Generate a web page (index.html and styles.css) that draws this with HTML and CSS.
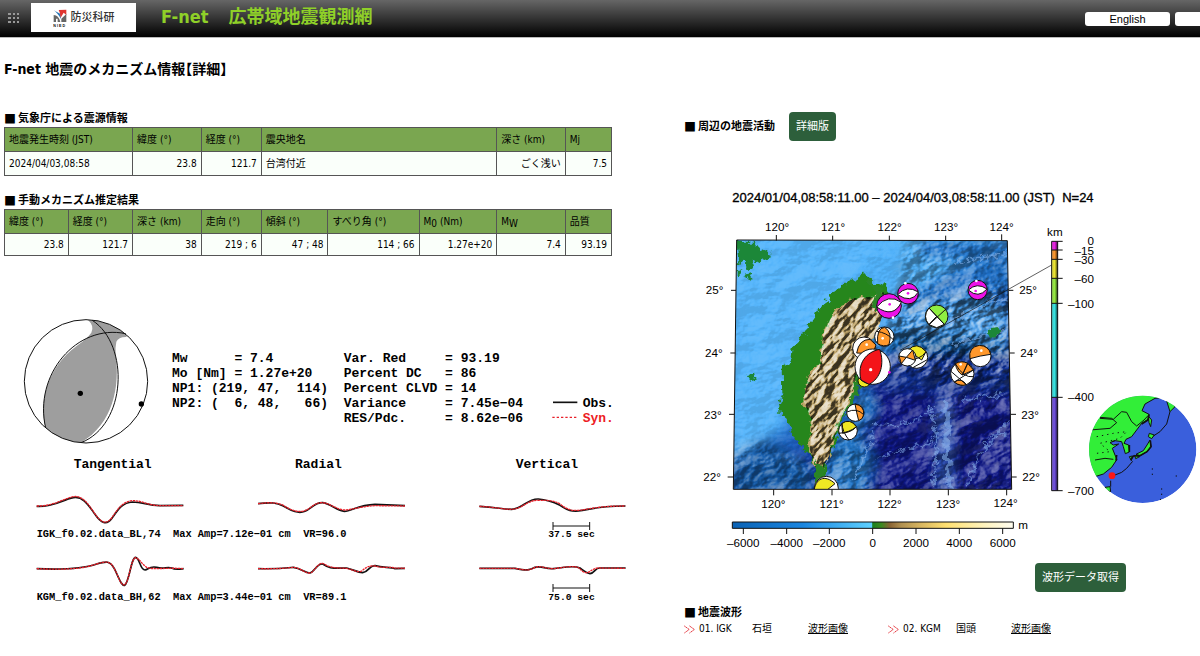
FILE: index.html
```html
<!DOCTYPE html>
<html lang="ja">
<head>
<meta charset="utf-8">
<title>F-net 広帯域地震観測網</title>
<link rel="stylesheet" href="styles.css">
</head>
<body>
<header class="topbar">
  <svg class="grip" viewBox="0 0 12 12" aria-hidden="true"><g fill="#999"><path d="M0 1h3v2H0zM5 1h2v2H5zM9 1h2v2H9zM0 5h3v2H0zM5 5h2v2H5zM9 5h2v2H9zM0 9h3v2H0zM5 9h2v2H5zM9 9h2v2H9z"/></g></svg>
  <a class="logo" href="#">
    <svg class="logo-mark" viewBox="0 0 42 54" aria-hidden="true">
      <path d="M2 4L23 15L24 30Q12 10 2 4Z" fill="#2b78b8"/>
      <path d="M17 3L40 2V18L32 11L23 26Q22 12 17 3Z" fill="#e03530"/>
      <path d="M2 18Q17 18 22 39H14V29H9V39H2ZM25 29L40 15V39H25Z" fill="#666"/>
      <text x="1" y="53" class="logo-sub">NIED</text>
    </svg>
    <span>防災科研</span>
  </a>
  <div class="site-name"><span>F-net</span><span>広帯域地震観測網</span></div>
  <nav class="lang"><button type="button">English</button><button type="button"></button></nav>
</header>
<main class="columns">
  <div class="left">
    <div class="tables">
      <h1>F-net 地震のメカニズム情報【詳細】</h1>
      <h2><span class="sq">■</span>気象庁による震源情報</h2>
      <table class="source">
        <colgroup><col style="width:21.1%"><col style="width:11.3%"><col style="width:9.9%"><col style="width:38.8%"><col style="width:11.3%"><col style="width:7.6%"></colgroup>
        <thead><tr><th>地震発生時刻 (JST)</th><th>緯度 (°)</th><th>経度 (°)</th><th>震央地名</th><th>深さ (km)</th><th>Mj</th></tr></thead>
        <tbody><tr><td class="l">2024/04/03,08:58</td><td>23.8</td><td>121.7</td><td class="l">台湾付近</td><td>ごく浅い</td><td>7.5</td></tr></tbody>
      </table>
      <h2><span class="sq">■</span>手動メカニズム推定結果</h2>
      <table class="result">
        <colgroup><col style="width:10.5%"><col style="width:10.6%"><col style="width:11.3%"><col style="width:9.9%"><col style="width:11%"><col style="width:15%"><col style="width:12.8%"><col style="width:11.3%"><col style="width:7.6%"></colgroup>
        <thead><tr><th>緯度 (°)</th><th>経度 (°)</th><th>深さ (km)</th><th>走向 (°)</th><th>傾斜 (°)</th><th>すべり角 (°)</th><th>M<sub>0</sub> (Nm)</th><th>M<sub>W</sub></th><th>品質</th></tr></thead>
        <tbody><tr><td>23.8</td><td>121.7</td><td>38</td><td>219 ; 6</td><td>47 ; 48</td><td>114 ; 66</td><td>1.27e+20</td><td>7.4</td><td>93.19</td></tr></tbody>
      </table>
    </div>
    <svg class="mechanism" viewBox="0 0 1920 930" role="img" aria-label="Moment tensor solution">
      <circle cx="258" cy="244" r="185" fill="#fff"/>
      <path d="M137 384C115 300 145 200 230 138Q262 115 274 98Q284 78 264 60Q325 62 377 101L380 111Q356 110 349 125Q345 145 347 165C360 260 340 370 243 428Q185 425 137 384Z" fill="#9e9e9e"/>
      <g class="rule"><circle cx="258" cy="244" r="185"/><path d="M137 384C100 225 230 70 377 101M277 61C390 135 380 375 243 428"/></g>
      <circle cx="241" cy="280" r="8"/><circle cx="424" cy="312" r="8"/>
      <g class="mono">
        <text x="516" y="186">Mw      = 7.4</text>
        <text x="516" y="231">Mo [Nm] = 1.27e+20</text>
        <text x="516" y="275">NP1: (219, 47,  114)</text>
        <text x="516" y="320">NP2: (  6, 48,   66)</text>
        <text x="1031" y="186">Var. Red     = 93.19</text>
        <text x="1031" y="231">Percent DC   = 86</text>
        <text x="1031" y="275">Percent CLVD = 14</text>
        <text x="1031" y="320">Variance     = 7.45e−04</text>
        <text x="1031" y="365">RES/Pdc.     = 8.62e−06</text>
        <text x="1748" y="320">Obs.</text>
        <text x="1748" y="365" class="syn-text">Syn.</text>
        <text x="221" y="503">Tangential</text><text x="885" y="503">Radial</text><text x="1547" y="503">Vertical</text>
      </g>
      <path d="M1659 307H1732" class="obs"/><path d="M1657 352H1732" class="syn key"/>
      <g transform="translate(0 540)">
        <g class="obs">
          <path d="M110 79C160 82 185 60 220 53C250 47 268 80 285 103C303 130 320 137 336 115C352 92 365 68 397 66C430 66 440 76 480 77L550 76"/>
          <path d="M774 71C815 66 830 68 850 78C875 93 895 102 915 94C935 85 945 67 968 68C995 72 1010 93 1033 94C1055 93 1075 75 1125 73L1215 77"/>
          <path d="M1438 79C1490 82 1510 88 1535 88C1570 86 1580 56 1615 57C1645 59 1660 66 1680 76C1705 93 1715 94 1735 93C1770 89 1790 78 1876 78"/>
          <path d="M110 266C200 270 250 266 290 252C320 243 330 242 343 266C357 293 363 318 374 316C388 308 393 232 407 232C420 235 420 270 435 270C445 268 450 257 470 262C490 268 500 260 515 264C525 270 535 268 551 266"/>
          <path d="M774 266C840 267 860 264 880 262C905 265 915 280 930 279C945 275 950 250 968 252C985 263 990 266 1040 264C1060 268 1070 277 1088 278C1107 276 1107 256 1125 257C1150 264 1170 260 1185 266L1215 265"/>
          <path d="M1438 265H1545C1580 272 1590 271 1605 262C1625 256 1635 268 1660 266C1690 263 1720 255 1740 264C1755 275 1760 280 1770 281C1785 279 1785 263 1800 264L1877 264"/>
        </g>
        <g class="syn">
          <path d="M110 78C160 79 185 58 220 50C250 45 268 78 286 103C303 129 320 134 335 114C350 92 365 65 397 62C430 62 440 76 480 77L550 77"/>
          <path d="M774 71C815 66 830 68 850 76C875 93 895 98 915 92C935 83 945 67 968 68C995 72 1010 89 1033 90C1055 90 1075 80 1125 77L1215 78"/>
          <path d="M1438 79C1490 82 1510 88 1535 88C1570 86 1580 60 1615 61C1645 61 1665 61 1683 74C1705 91 1715 92 1735 91C1770 88 1790 78 1876 78"/>
          <path d="M110 266C200 270 250 266 290 252C320 243 330 242 343 266C357 293 363 318 374 314C388 306 393 232 407 233C420 238 425 252 440 262C460 270 500 262 551 266"/>
          <path d="M774 266C840 267 860 264 880 262C905 265 915 280 930 279C945 275 950 250 968 250C985 259 990 264 1040 265C1060 270 1065 275 1080 275C1092 272 1095 256 1125 258C1150 265 1170 260 1185 264L1215 265"/>
          <path d="M1438 265H1545C1580 272 1590 271 1605 262C1625 256 1635 266 1660 266C1690 263 1720 255 1737 264C1748 276 1755 280 1765 277C1780 268 1785 263 1800 264L1877 265"/>
        </g>
        <g class="mono small">
          <text x="110" y="171">IGK_f0.02.data_BL,74  Max Amp=7.12e−01 cm  VR=96.0</text>
          <text x="110" y="359">KGM_f0.02.data_BH,62  Max Amp=3.44e−01 cm  VR=89.1</text>
          <text x="1645" y="172" class="scale">37.5 sec</text><text x="1645" y="360" class="scale">75.0 sec</text>
        </g>
        <path class="rule" d="M1659 138H1769M1659 126V150M1769 126V150M1659 324H1769M1659 312V336M1769 312V336"/>
      </g>
    </svg>
  </div>
  <div class="right">
    <div class="activity"><h2><span class="sq">■</span>周辺の地震活動</h2><button type="button" class="btn">詳細版</button></div>
    <svg class="map" viewBox="0 0 1548 1140" role="img" aria-label="Seismicity map around Taiwan">
      <defs>
        <linearGradient id="sea" x1=".1" y1="0" x2=".85" y2="1"><stop offset="0" stop-color="#55b9ff"/><stop offset=".38" stop-color="#4eaff8"/><stop offset=".5" stop-color="#2b86dc"/><stop offset=".65" stop-color="#10359f"/><stop offset="1" stop-color="#0b1380"/></linearGradient>
        <linearGradient id="elev"><stop offset="0" stop-color="#0b62b4"/><stop offset=".25" stop-color="#1a86e0"/><stop offset=".49" stop-color="#5ccfff"/><stop offset=".498" stop-color="#5ccfff"/><stop offset=".499" stop-color="#1a8020"/><stop offset=".53" stop-color="#3a8a20"/><stop offset=".56" stop-color="#8a6434"/><stop offset=".6" stop-color="#b09050"/><stop offset=".67" stop-color="#d8b660"/><stop offset=".76" stop-color="#ffe070"/><stop offset=".9" stop-color="#fff4c0"/><stop offset="1" stop-color="#fffdf0"/></linearGradient>
        <linearGradient id="shade"><stop offset="0" stop-color="#fff" stop-opacity=".3"/><stop offset=".5" stop-opacity="0"/><stop offset="1" stop-opacity=".75"/></linearGradient>
        <filter id="seaRelief" x="0" y="0" width="1" height="1" color-interpolation-filters="sRGB"><feTurbulence type="fractalNoise" baseFrequency=".008 .013" numOctaves="5" seed="8"/><feDiffuseLighting surfaceScale="46" lighting-color="#fff"><feDistantLight azimuth="225" elevation="31"/></feDiffuseLighting></filter>
        <filter id="landRelief" x="0" y="0" width="1" height="1" color-interpolation-filters="sRGB"><feTurbulence type="fractalNoise" baseFrequency=".022 .05" numOctaves="4" seed="4"/><feDiffuseLighting surfaceScale="36" lighting-color="#fff"><feDistantLight azimuth="250" elevation="38"/></feDiffuseLighting></filter>
        <filter id="soft" x="-.3" y="-.3" width="1.6" height="1.6"><feGaussianBlur stdDeviation="16"/></filter>
        <filter id="crest" x="-.3" y="-.3" width="1.6" height="1.6"><feTurbulence type="fractalNoise" baseFrequency=".05" numOctaves="3" seed="5"/><feDisplacementMap in="SourceGraphic" scale="40" xChannelSelector="R" yChannelSelector="G"/><feGaussianBlur stdDeviation="2"/></filter>
        <filter id="rough"><feTurbulence type="fractalNoise" baseFrequency=".05" numOctaves="3" seed="2"/><feDisplacementMap in="SourceGraphic" scale="32" xChannelSelector="R" yChannelSelector="G"/></filter>
        <clipPath id="frame"><path d="M50 60L862 62L875 808L40 808Z"/></clipPath>
        <mask id="deep" maskUnits="userSpaceOnUse" x="0" y="0" width="940" height="860"><g filter="url(#soft)"><path d="M560 60H920V850H0V690L120 660L210 700L270 720L400 600L400 400L510 300Z" fill="#999"/><path d="M520 230L900 200V480H520Z" fill="#fff"/><path d="M440 460H640V800H440Z" fill="#777"/></g></mask>
        <clipPath id="peaks"><path d="M455 230L490 215L500 250L480 310L470 335L425 400L405 480L395 530L365 590L340 660L325 720L305 750L285 740L270 690L275 600L250 540L265 470L300 430L310 340L340 280L400 235Z"/></clipPath>
        <clipPath id="globe"><circle cx="428" cy="688" r="161"/></clipPath>
      </defs>
      <text x="145" y="66" class="plot-title">2024/01/04,08:58:11.00 – 2024/04/03,08:58:11.00 (JST)  N=24</text>
      <g transform="translate(108 120)">
        <g clip-path="url(#frame)">
          <path d="M40 50H880V810H40Z" fill="url(#sea)"/>
          <g filter="url(#soft)">
            <path d="M600 60H880V150L700 120L600 110Z" fill="#2277cf"/>
            <path d="M510 260L700 200L870 260V380L700 390L560 350Z" fill="#4299e8"/>
            <path d="M540 250L700 150L870 130V190L680 240Z" fill="#1f6fca"/>
            <path d="M590 330L880 390V470L700 430L510 400Z" fill="#0d58a0"/>
            <path d="M450 480H880V830H480Z" fill="#0a1288"/>
            <path d="M500 400H900V520H480Z" fill="#0d2f95"/>
            <path d="M30 700L120 645L220 700L280 740V830H30Z" fill="#135fb0"/>
            <path d="M300 830L330 650L400 560L440 510L470 560L420 640L460 720L440 830Z" fill="#2278cc"/>
            <path d="M655 530H690L700 810H655Z" fill="#3058c0"/>
            <path d="M40 60H480L250 350L200 520L190 620L30 710Z" fill="#56b6fc"/>
          </g>
          <g mask="url(#deep)" class="relief strong"><rect x="-200" y="-100" width="1300" height="1100" filter="url(#seaRelief)" transform="rotate(-20 450 430)"/></g>
          <rect x="40" y="50" width="840" height="760" filter="url(#seaRelief)" class="relief faint"/>
          <g filter="url(#crest)">
            <path d="M680 545C685 620 675 700 690 800" class="ridge wide"/>
            <path d="M740 800L780 700L850 620L880 600M630 560L650 640L640 800M730 540L850 520M800 650L860 640M400 780L430 720L460 640M700 130L860 100M640 330L800 250L870 240M700 370L860 330" class="ridge"/>
            <path d="M455 610L530 615L600 600L640 560M470 715L540 690L620 670L655 640" class="ridge thin"/>
          </g>
          <path d="M415 170L438 160L445 178L500 200L505 240L480 300L465 330L440 380L418 470L412 520L388 560L370 600L350 660L325 710L315 770L300 790L285 790L285 740L262 695L215 650L205 600L175 575L175 550L190 520L188 440L210 430L215 385L270 315L340 210L380 195Z" fill="#25861f" filter="url(#rough)"/>
          <path d="M455 230L490 215L500 250L480 310L470 335L425 400L405 480L395 530L365 590L340 660L325 720L305 750L285 740L270 690L275 600L250 540L265 470L300 430L310 340L340 280L400 235Z" fill="#bfa468" filter="url(#rough)"/>
          <g clip-path="url(#peaks)" class="relief land"><rect x="0" y="100" width="700" height="700" filter="url(#landRelief)" transform="rotate(-48 350 450)"/></g>
          <path d="M440 178L490 205L490 240L470 280L455 260L465 220ZM418 450L435 430L420 500L385 570L400 510ZM290 710L310 750L300 790L285 780Z" fill="#2c8526" filter="url(#rough)"/>
          <path d="M50 65H105L110 80L155 95L140 120L120 130L95 115L105 140L85 150L70 125L55 130ZM75 165L90 160L98 175L85 182ZM50 155H62V165H50ZM80 462L105 460L110 480L88 485ZM805 325L820 320L840 335L825 347L800 340Z" fill="#1e8737" filter="url(#rough)"/>
          <g class="ball">
            <circle cx="507" cy="258" r="37" fill="#ed12e8"/><path d="M470 261Q505 219 544 247Q520 296 470 261Z" fill="#fff"/>
            <circle cx="564" cy="221" r="31" fill="#ed12e8"/><path d="M533 224Q560 194 595 216Q574 252 533 224Z" fill="#fff"/>
            <circle cx="773" cy="210" r="29" fill="#ed12e8"/><path d="M745 210Q771 186 801 207Q775 237 745 210Z" fill="#fff"/>
            <circle cx="650" cy="289" r="34" fill="#8fee42"/><path d="M650 289L627 264Q606 289 627 314ZM650 289L673 313L650 323L627 314Z" fill="#fff"/><path d="M627 264L673 313M677 268L627 314"/>
            <circle cx="493" cy="350" r="29" fill="#fff"/><path d="M473 371Q469 324 494 322Q518 337 507 374Q491 382 473 371Z" fill="#ff982c"/><path d="M470 334Q500 338 520 359"/>
            <circle cx="432" cy="385" r="34" fill="#fff"/><path d="M410 399Q417 358 450 358L468 375L458 401Z" fill="#ff982c"/>
            <circle cx="433" cy="482" r="19" fill="#efe824"/>
            <circle cx="458" cy="440" r="53" fill="#fff"/><path d="M423 480C410 430 440 395 479 388C494 430 483 475 447 493Z" fill="#f41419"/>
            <circle cx="590" cy="412" r="33" fill="#fff"/><path d="M564 391Q590 362 618 395L605 420Z" fill="#efe824"/><path d="M559 416Q600 423 618 395M580 442L620 420"/>
            <circle cx="562" cy="412" r="26" fill="#fff"/><path d="M537 408L559 412L578 390L586 421L559 412L544 431Z" fill="#ff982c"/>
            <circle cx="781" cy="408" r="32" fill="#fff"/><path d="M750 416Q744 382 778 376Q807 378 812 403Q780 407 750 416Z" fill="#ff982c"/>
            <circle cx="727" cy="461" r="35" fill="#fff"/><path d="M727 465Q710 455 706 431Q724 420 743 430ZM703 486Q725 472 739 494Q720 500 703 486ZM727 465L743 430L760 450Z" fill="#ff982c"/><path d="M694 455L739 494M706 431Q730 475 760 470M703 486L760 450"/>
            <circle cx="406" cy="578" r="26" fill="#fff"/><path d="M405 552Q433 557 431 584Q429 598 416 602Q410 580 405 552Z" fill="#ff982c"/><path d="M381 576Q410 562 431 584"/>
            <circle cx="384" cy="632" r="28" fill="#fff"/><path d="M368 640L365 611Q390 593 409 620Q398 635 368 640Z" fill="#efe824"/><path d="M357 640Q390 637 409 620M366 609Q367 636 387 660"/>
            <circle cx="319" cy="805" r="36" fill="#fff"/><path d="M345 791L315 815H282C285 775 315 762 345 791Z" fill="#efe824"/>
          </g>
          <g fill="#fff"><circle cx="452" cy="449" r="5"/><circle cx="440" cy="374" r="4"/><circle cx="488" cy="355" r="4"/><circle cx="722" cy="433" r="4"/><circle cx="784" cy="392" r="4"/><circle cx="556" cy="190" r="4"/><circle cx="769" cy="183" r="4"/><circle cx="519" cy="293" r="4"/></g>
          <g fill="#ed12e8"><circle cx="509" cy="253" r="4"/><circle cx="564" cy="220" r="4"/><circle cx="767" cy="213" r="4"/><circle cx="508" cy="457" r="4"/></g>
        </g>
        <path class="rule" d="M50 60L862 62L875 808L40 808Z"/>
        <path class="rule leader" d="M540 391L995 135"/>
        <path class="rule" d="M169 45V62M338 47V62M508 47V62M677 47V62M845 43V62M161 808V826M336 808V826M510 808V826M685 808V826M860 808V826M33 211H48M31 399H46M27 583H43M23 771H41M866 211H880M869 399H884M872 583H888M875 771H890"/>
        <g class="plot-text mid">
          <text x="171" y="34">120°</text><text x="339" y="34">121°</text><text x="509" y="34">122°</text><text x="678" y="34">123°</text><text x="845" y="32">124°</text>
          <text x="160" y="865">120°</text><text x="335" y="865">121°</text><text x="509" y="865">122°</text><text x="684" y="865">123°</text><text x="857" y="862">124°</text>
        </g>
        <g class="plot-text end">
          <text x="10" y="223">25°</text><text x="8" y="411">24°</text><text x="5" y="596">23°</text><text x="3" y="783">22°</text>
          <text x="951" y="223">25°</text><text x="954" y="411">24°</text><text x="957" y="596">23°</text><text x="960" y="783">22°</text>
        </g>
      </g>
      <g transform="translate(948 120)">
        <path d="M155 64h18v26h-18z" fill="#ed20e8"/><path d="M155 90h18v28h-18z" fill="#ff982c"/><path d="M155 118h18v57h-18z" fill="#efe830"/><path d="M155 175h18v75h-18z" fill="#98ee42"/><path d="M155 250h18v282h-18z" fill="#36e6e4"/><path d="M155 532h18v280h-18z" fill="#7050e0"/>
        <path d="M155 64h18v748h-18z" fill="url(#shade)"/>
        <path class="rule" d="M155 64H188M155 90H188M155 118H188M155 175H188M155 250H188M155 532H188M155 812H188M155 64V812M173 64V812"/>
        <g class="plot-text end"><text x="188" y="47">km</text><text x="282" y="76">0</text><text x="282" y="104">–15</text><text x="282" y="133">–30</text><text x="282" y="188">–60</text><text x="282" y="263">–100</text><text x="282" y="544">–400</text><text x="282" y="825">–700</text></g>
        <g clip-path="url(#globe)">
          <circle cx="428" cy="688" r="161" fill="#3a5fdc"/>
          <g class="coast">
            <path d="M250 500H480L488 533L465 535L435 552L426 572L447 583L444 598L425 610L410 630L395 650L378 658L372 670L386 675L388 696L376 701L370 680L365 665L345 662L330 668L340 675L356 672L337 685L345 705L351 718L335 742L310 762L285 770L250 780Z"/>
            <path d="M445 588L455 600L452 620L447 608ZM448 640L463 645L455 656L445 650ZM450 660L453 680L441 695L420 707L408 703L430 692L441 675ZM404 706L419 710L407 716ZM388 710L397 708L394 722ZM500 543L512 530L525 560L510 575ZM315 802L330 800L332 815L320 812Z"/>
            <path class="line" d="M270 630L330 625L350 608L335 595L300 592M300 595L340 598L365 575L380 577L395 605L410 618L432 600L445 586M345 662L335 665M285 720L315 715L340 718M510 575L500 612L480 635L460 648M398 724L380 745L365 757L345 765M332 782V800"/>
            <path class="line bold" d="M447 583L444 600L425 612M388 675L388 696M451 662L453 680L441 695L420 707L400 708L392 720M350 705L348 722"/>
            <path class="dots" d="M290 650L340 640L380 635L360 655L300 670L330 695L290 700M485 805V830L480 842M457 745V765M527 768H535"/>
          </g>
        </g>
        <circle cx="336" cy="767" r="10" fill="#ff1616"/>
      </g>
      <g transform="translate(108 900)">
        <path d="M37 126H880V145H37Z" fill="url(#elev)"/>
        <path class="rule" d="M37 126H880V145H37ZM70 145V162M200 145V162M328 145V162M458 145V162M588 145V162M718 145V162M848 145V162"/>
        <g class="plot-text mid"><text x="70" y="200">–6000</text><text x="200" y="200">–4000</text><text x="328" y="200">–2000</text><text x="458" y="200">0</text><text x="588" y="200">2000</text><text x="718" y="200">4000</text><text x="848" y="200">6000</text><text x="909" y="146">m</text></g>
      </g>
    </svg>
    <div class="download"><button type="button" class="btn">波形データ取得</button></div>
    <h2><span class="sq">■</span>地震波形</h2>
    <div class="stations">
      <span class="code"><svg class="chev" viewBox="0 0 34 26" aria-hidden="true"><path d="M1 2L16 13L1 24M17 2L32 13L17 24"/></svg>01. IGK</span><span>石垣</span><a href="#">波形画像</a>
      <span class="code"><svg class="chev" viewBox="0 0 34 26" aria-hidden="true"><path d="M1 2L16 13L1 24M17 2L32 13L17 24"/></svg>02. KGM</span><span>国頭</span><a href="#">波形画像</a>
    </div>
  </div>
</main>
</body>
</html>
```
FILE: styles.css
```css
* { box-sizing: border-box; }
body {
  margin: 0;
  background: #fff;
  color: #000;
  font: 10px/14px "DejaVu Sans Condensed", "Noto Sans CJK JP", sans-serif;
}
button { font: inherit; border: 0; cursor: pointer; }
.topbar {
  display: flex;
  align-items: flex-start;
  height: 38px;
  padding: 3px 0 0 8px;
  overflow: hidden;
  background: linear-gradient(#666, #000);
  border-bottom: 1px solid #bbb;
}
.grip { width: 12px; height: 12px; margin: 9px 11px 0 0; }
.logo {
  display: flex;
  align-items: center;
  justify-content: center;
  gap: 4px;
  width: 105px;
  height: 29px;
  background: #fff;
  color: #333;
  font-size: 11px;
  font-weight: 500;
  text-decoration: none;
}
.logo-mark { width: 14px; height: 18px; }
.logo-sub { font: bold 11px "Liberation Sans", sans-serif; letter-spacing: 3px; }
.site-name {
  display: flex;
  gap: 20px;
  margin-left: 25px;
  color: #8fd028;
  font-size: 18px;
  font-weight: bold;
  line-height: 28px;
}
.lang { display: flex; gap: 5px; margin: 9px -60px 0 auto; }
.lang button {
  width: 85px;
  height: 14px;
  padding: 0;
  border-radius: 3px;
  background: #fff;
  font: 11px/14px "Liberation Sans", sans-serif;
}
.columns { display: grid; grid-template-columns: 57% 43%; }
.tables { padding: 21px 72px 0 4px; }
h1 {
  margin: 0 0 32px;
  font-size: 14px;
  line-height: 20px;
  font-feature-settings: "halt";
}
h2 {
  display: flex;
  align-items: center;
  gap: 2px;
  margin: 0;
  font-size: 11px;
  line-height: 16px;
}
.sq { font-family: "Noto Sans CJK JP", sans-serif; font-size: 12px; }
table {
  width: 100%;
  table-layout: fixed;
  border-collapse: collapse;
}
th, td {
  height: 24px;
  padding: 0 4px;
  border: 1px solid #555;
  white-space: nowrap;
}
th { background: #7aa650; font-weight: normal; text-align: left; }
td { background: #fafffa; text-align: right; }
td.l { text-align: left; }
.source { margin-bottom: 17px; }
.result td { height: 22px; }
sub { font-size: 10px; line-height: 0; vertical-align: -2px; }
.mechanism { display: block; width: 100%; max-width: 640px; margin-top: 44px; }
.rule { fill: none; stroke: #111; stroke-width: 3; }
.leader { stroke-width: 2; }
.mono { font: bold 39px "Liberation Mono", monospace; white-space: pre; }
.mono text, .plot-title { white-space: pre; }
.small { font-size: 31px; }
.scale { font-size: 29px; }
.syn-text { fill: #ed1c24; }
.obs { fill: none; stroke: #111; stroke-width: 5; }
.syn { fill: none; stroke: #e8202a; stroke-width: 4; stroke-dasharray: 7 2; }
.syn.key { stroke-dasharray: 7 6; }
.right { padding-top: 74px; }
.activity { display: flex; align-items: center; gap: 14px; height: 29px; }
.btn {
  padding: 7px 7px;
  border-radius: 4px;
  background: #2d5f3b;
  color: #fff;
  font-size: 11px;
  line-height: 15px;
}
.map { display: block; width: 100%; margin-top: 39px; }
.plot-title { font: 39px "Liberation Sans", sans-serif; stroke: #000; stroke-width: 1; }
.plot-text { font: 35px "Liberation Sans", sans-serif; }
.mid { text-anchor: middle; }
.end { text-anchor: end; }
.relief { mix-blend-mode: hard-light; }
.strong { opacity: .6; }
.faint { opacity: .08; }
.land { opacity: .7; }
.ridge { fill: none; stroke: #87b4ee; stroke-width: 6; stroke-opacity: .55; }
.ridge.wide { stroke-width: 16; }
.ridge.thin { stroke-width: 4; }
.ball { fill: none; stroke: #111; stroke-width: 3; }
.coast { fill: #32ee38; stroke: #111; stroke-width: 3; }
.line { fill: none; }
.line.bold { stroke-width: 5; }
.dots { fill: none; stroke-dasharray: 4 12; }
.download { display: flex; justify-content: flex-end; margin: 3px 74px 13px 0; }
.stations {
  display: grid;
  grid-template-columns: 68px 56px 80px 68px 55px 80px;
  line-height: 16px;
}
.code { display: flex; align-items: center; gap: 4px; }
.stations a { color: #000; }
.chev { width: 11px; height: 9px; fill: none; stroke: #e01820; stroke-width: 3; stroke-dasharray: 5 2; }
```
